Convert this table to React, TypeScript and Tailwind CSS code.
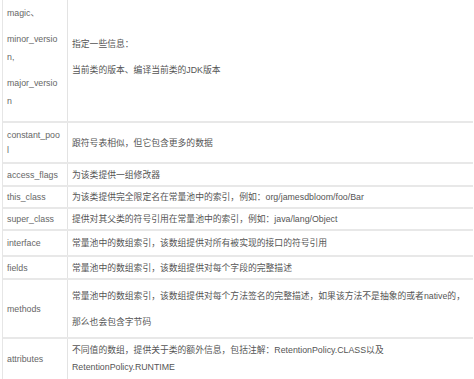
import React from "react";

type Row = { h: string; left: React.ReactNode; right: React.ReactNode; ll?: string; rl?: string };

const P = ({ children, last }: { children: React.ReactNode; last?: boolean }) => (
  <p className={last ? "" : "mb-[8px]"}>{children}</p>
);

const rows: Row[] = [
  {
    h: "h-[130px]",
    left: (
      <>
        <P>magic、</P>
        <P>
          minor_versio
          <br />
          n,
        </P>
        <P last>
          major_versio
          <br />n
        </P>
      </>
    ),
    right: (
      <>
        <P>指定一些信息：</P>
        <P last>当前类的版本、编译当前类的JDK版本</P>
      </>
    ),
  },
  {
    h: "h-[41px]",
    ll: "leading-[15px]",
    left: (
      <>
        constant_poo
        <br />l
      </>
    ),
    right: <>跟符号表相似，但它包含更多的数据</>,
  },
  { h: "h-[23px]", left: "access_flags", right: "为该类提供一组修改器" },
  {
    h: "h-[22px]",
    left: "this_class",
    right: "为该类提供完全限定名在常量池中的索引，例如：org/jamesdbloom/foo/Bar",
  },
  {
    h: "h-[22px]",
    left: "super_class",
    right: "提供对其父类的符号引用在常量池中的索引，例如：java/lang/Object",
  },
  {
    h: "h-[26px]",
    left: "interface",
    right: "常量池中的数组索引，该数组提供对所有被实现的接口的符号引用",
  },
  {
    h: "h-[23px]",
    left: "fields",
    right: "常量池中的数组索引，该数组提供对每个字段的完整描述",
  },
  {
    h: "h-[59px]",
    left: "methods",
    right: (
      <>
        <P>常量池中的数组索引，该数组提供对每个方法签名的完整描述，如果该方法不是抽象的或者native的，</P>
        <P last>那么也会包含字节码</P>
      </>
    ),
  },
  {
    h: "h-[42px]",
    rl: "leading-[17px]",
    left: "attributes",
    right: (
      <>
        不同值的数组，提供关于类的额外信息，包括注解：RetentionPolicy.CLASS以及
        <br />
        RetentionPolicy.RUNTIME
      </>
    ),
  },
];

export default function App() {
  return (
    <div
      className="w-[474px] h-[379px] overflow-hidden bg-white"
      style={{ fontFamily: '"Liberation Sans", "Noto Sans CJK SC", sans-serif' }}
    >
      <div className="-mt-[7px] ml-[2px] w-[471px] border-l border-[#e6e6e6] text-[8.8px] leading-[18px]">
        {rows.map((r, i) => (
          <div key={i} className={`flex ${r.h} border-b-2 border-[#e8e8e8]`}>
            <div
              className={`w-[65px] shrink-0 flex flex-col justify-center pl-[4px] pr-[4px] border-r border-[#e3e3e3] text-[#666666] whitespace-nowrap ${r.ll ?? ""}`}
            >
              {r.left}
            </div>
            <div
              className={`flex-1 flex flex-col justify-center pl-[4px] text-[#555555] whitespace-nowrap ${r.rl ?? ""}`}
            >
              {r.right}
            </div>
          </div>
        ))}
      </div>
    </div>
  );
}
